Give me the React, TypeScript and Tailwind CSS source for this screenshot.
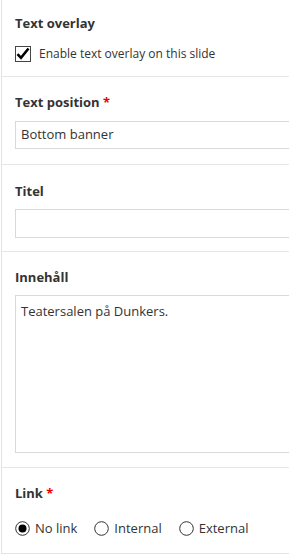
import React from "react";

const font = { fontFamily: '"Open Sans", "Noto Sans", Arial, sans-serif' };

function Radio({ checked }: { checked?: boolean }) {
  return (
    <svg width="15" height="15" viewBox="0 0 15 15" className="shrink-0">
      <circle cx="7.5" cy="7.5" r="6.8" fill="#fff" stroke="#333" strokeWidth="1" />
      {checked && <circle cx="7.5" cy="7.5" r="4" fill="#000" />}
    </svg>
  );
}

export default function App() {
  return (
    <div className="w-[289px] h-[557px] overflow-hidden bg-white text-[#333]" style={font}>
      <div className="w-[330px] ml-[1px] border-l border-b border-[#e3e3e3]">
        <div className="h-[77px] border-b border-[#e6e6e6] pl-[13px] pt-[14px]">
          <div className="text-[13px] font-bold leading-[18px] text-[#333]">Text overlay</div>
          <div className="flex items-center mt-[14px] gap-[8px]">
            <svg width="16" height="16" viewBox="0 0 16 16" className="shrink-0">
              <rect x="0.5" y="0.5" width="15" height="15" fill="#fff" stroke="#444" />
              <path d="M2.5 8.2 L6 11.8 L13.5 2.5" fill="none" stroke="#000" strokeWidth="2.6" />
            </svg>
            <span className="text-[12px] leading-[16px] text-[#333]">Enable text overlay on this slide</span>
          </div>
        </div>
        <div className="h-[88px] border-b border-[#e6e6e6] pl-[13px] pt-[16px]">
          <div className="text-[13px] font-bold leading-[18px]">
            Text position <span className="text-[#e00]">*</span>
          </div>
          <div className="mt-[10px] h-[28px] border border-[#d9d9d9] flex items-center pl-[5px] text-[13px]">
            Bottom banner
          </div>
        </div>
        <div className="h-[87px] border-b border-[#e6e6e6] pl-[13px] pt-[17px]">
          <div className="text-[13px] font-bold leading-[18px]">Titel</div>
          <div className="mt-[9px] h-[29px] border border-[#d9d9d9]"></div>
        </div>
        <div className="h-[216px] border-b border-[#e6e6e6] pl-[13px] pt-[16px]">
          <div className="text-[13px] font-bold leading-[18px]">Innehåll</div>
          <div className="mt-[9px] h-[158px] border border-[#d9d9d9] pl-[5px] pt-[6px] text-[13px] leading-[18px]">
            Teatersalen på Dunkers.
          </div>
        </div>
        <div className="h-[85px] pl-[13px] pt-[16px]">
          <div className="text-[13px] font-bold leading-[18px]">
            Link <span className="text-[#e00]">*</span>
          </div>
          <div className="flex items-center mt-[17px] text-[13px]">
            <div className="flex items-center gap-[5px]">
              <Radio checked />
              <span>No link</span>
            </div>
            <div className="flex items-center gap-[5px] ml-[17px]">
              <Radio />
              <span>Internal</span>
            </div>
            <div className="flex items-center gap-[5px] ml-[17px]">
              <Radio />
              <span>External</span>
            </div>
          </div>
        </div>
      </div>
    </div>
  );
}
